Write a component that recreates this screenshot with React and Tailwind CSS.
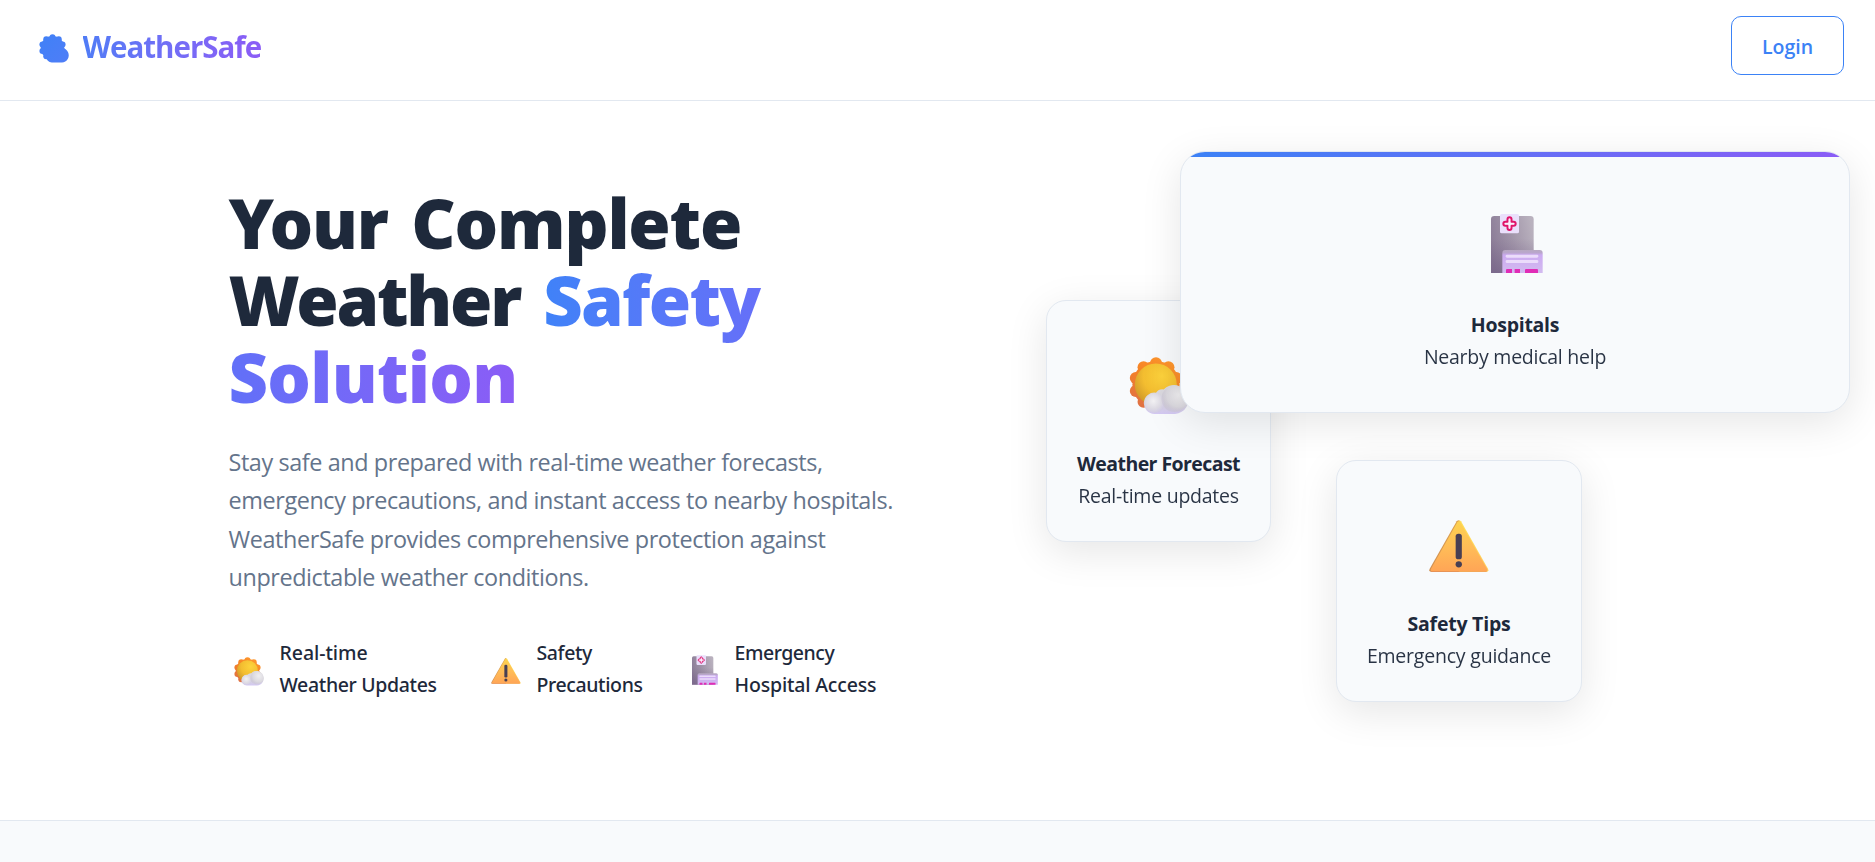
import React from 'react';

// Ten rounded petals spaced evenly around the disc.
const petals = Array.from({ length: 10 }, (_, i) => {
  const a = (i * Math.PI) / 5;
  return [27 + 21.2 * Math.sin(a), 27.5 - 21.2 * Math.cos(a)];
});
const cloudPath =
  'M25.5 57A10.7 10.7 0 1 1 27 35.7A8 8 0 0 1 34.6 32.4A14.5 14.5 0 1 1 46 57Z';

function Petals({ fill }) {
  return (
    <g fill={fill}>
      <circle cx="27" cy="27.5" r="23.6" />
      {petals.map(([x, y], i) => (
        <circle key={i} cx={x} cy={y} r="6" />
      ))}
    </g>
  );
}

function SunCloud({ id, className }) {
  return (
    <svg viewBox="0 0 60 58" className={className}>
      <defs>
        <linearGradient id={`${id}-ray`} gradientUnits="userSpaceOnUse" x1="42" y1="0" x2="12" y2="54">
          <stop offset="0" stopColor="#ff9a2e" />
          <stop offset="0.45" stopColor="#f58225" />
          <stop offset="1" stopColor="#dd6f48" />
        </linearGradient>
        <radialGradient id={`${id}-disc`} cx="0.65" cy="0.3" r="0.75">
          <stop offset="0" stopColor="#fdd33c" />
          <stop offset="0.6" stopColor="#f3bd30" />
          <stop offset="1" stopColor="#d19a2a" />
        </radialGradient>
        <radialGradient id={`${id}-left`} cx="0.45" cy="0.4" r="0.65">
          <stop offset="0" stopColor="#f3f2f4" />
          <stop offset="0.6" stopColor="#dedbe4" />
          <stop offset="1" stopColor="#cfc8e6" />
        </radialGradient>
        <linearGradient id={`${id}-cloud`} x1="0" y1="0" x2="0" y2="1">
          <stop offset="0" stopColor="#dddce0" />
          <stop offset="0.65" stopColor="#d6d3dc" />
          <stop offset="1" stopColor="#d3c8f3" />
        </linearGradient>
        <radialGradient id={`${id}-right`} cx="0.65" cy="0.35" r="0.65">
          <stop offset="0" stopColor="#efeef0" />
          <stop offset="0.7" stopColor="#dbd9df" />
          <stop offset="1" stopColor="#cac5d2" stopOpacity="0.5" />
        </radialGradient>
      </defs>
      <Petals fill={`url(#${id}-ray)`} />
      <circle cx="26.8" cy="27.5" r="21" fill={`url(#${id}-disc)`} />
      <path d={cloudPath} fill={`url(#${id}-cloud)`} />
      <circle cx="25.5" cy="46" r="10" fill={`url(#${id}-left)`} />
      <circle cx="45.6" cy="41.8" r="13.2" fill={`url(#${id}-right)`} />
    </svg>
  );
}

function Warning({ id, className }) {
  return (
    <svg viewBox="0 0 180 157" className={className}>
      <defs>
        <linearGradient id={`${id}-t`} x1="0" y1="0" x2="0" y2="1">
          <stop offset="0" stopColor="#fdd24f" />
          <stop offset="0.55" stopColor="#ffbb57" />
          <stop offset="1" stopColor="#ffa556" />
        </linearGradient>
        <linearGradient id={`${id}-e`} x1="0" y1="0" x2="1" y2="0">
          <stop offset="0" stopColor="#cf8f52" />
          <stop offset="0.49" stopColor="#dca04f" />
          <stop offset="0.52" stopColor="#ffdf57" />
          <stop offset="1" stopColor="#ffd05c" />
        </linearGradient>
      </defs>
      <path
        d="M83 4Q89.500 -3 96 4L177 146Q181 156 171 156H8Q-2 156 2 146Z"
        fill={`url(#${id}-e)`}
      />
      <path d="M85 7Q89.500 1 94 7L174 146Q177 154 170 154H10Q3 154 6 146Z" fill={`url(#${id}-t)`} />
      <path d="M6 155.500H173" stroke="#ee8f58" strokeWidth="2.500" />
      <rect x="80" y="41" width="18.500" height="77" rx="8" fill="#483f53" />
      <circle cx="89.300" cy="133" r="9.500" fill="#483f53" />
    </svg>
  );
}

function Hospital({ id, className }) {
  return (
    <svg viewBox="0 0 156 177" className={className}>
      <defs>
        <linearGradient id={`${id}-b`} x1="0" y1="0.6" x2="1" y2="0.3">
          <stop offset="0" stopColor="#8a7b96" />
          <stop offset="0.5" stopColor="#a094a8" />
          <stop offset="1" stopColor="#b9b1be" />
        </linearGradient>
        <linearGradient id={`${id}-s`} x1="0" y1="0" x2="0" y2="1">
          <stop offset="0.4" stopColor="#6a5480" stopOpacity="0" />
          <stop offset="1" stopColor="#6a5480" stopOpacity="0.45" />
        </linearGradient>
        <linearGradient id={`${id}-f`} x1="0" y1="0" x2="0" y2="1">
          <stop offset="0" stopColor="#b7a9c2" />
          <stop offset="0.12" stopColor="#b9a6cc" />
          <stop offset="0.22" stopColor="#cbaaf1" />
          <stop offset="1" stopColor="#d3bbf0" />
        </linearGradient>
      </defs>
      <path d="M0 177V16Q0 6 10 6H118Q128 6 128 16V177Z" fill={`url(#${id}-b)`} />
      <path d="M0 177V16Q0 6 10 6H118Q128 6 128 16V177Z" fill={`url(#${id}-s)`} />
      <path d="M34 177V117Q34 108 43 108H146Q155 108 155 117V177Z" fill={`url(#${id}-f)`} />
      <rect x="44" y="122" width="98" height="9" rx="4" fill="#ebdcfb" />
      <rect x="44" y="138" width="98" height="9" rx="4" fill="#ebdcfb" />
      <path d="M45 177V168Q45 165 48 165H63V177ZM71 177V165H87V177ZM102 177V168Q102 165 105 165H138Q141 165 141 168V177Z" fill="#e02cb6" />
      <rect x="27" y="0" width="57" height="58" rx="5" fill="#eadffb" />
      <path
        d="M49.500 16Q49.500 10 55.500 10T61.500 16V23H68Q74 23 74 29T68 35H61.500V42Q61.500 48 55.500 48T49.500 42V35H43Q37 35 37 29T43 23H49.500Z"
        fill="#f6e6fb"
        stroke="#e0146a"
        strokeWidth="6"
        strokeLinejoin="round"
      />
      <path d="M55.500 16V42M42 29H69" stroke="#fbeefc" strokeWidth="4" />
    </svg>
  );
}

function Card({ className, icon, title, titleClass, sub, subClass, bar }) {
  return (
    <div
      className={`absolute overflow-hidden border border-[#e2e8f0] bg-[#f8fafc] text-center shadow-[0_10px_40px_rgba(0,0,0,0.1)] ${className}`}
    >
      {bar && (
        <div className="absolute inset-x-0 top-0 h-[5px] bg-[linear-gradient(90deg,#3b82f6,#8b5cf6)]" />
      )}
      <div className="mb-[21px] flex h-[96px] items-end justify-center">{icon}</div>
      <div className={`whitespace-nowrap text-[19.5px] font-bold leading-[32px] ${titleClass}`}>{title}</div>
      <div className={`whitespace-nowrap text-[19.5px] leading-[32px] opacity-95 ${subClass}`}>{sub}</div>
    </div>
  );
}

const lines = [
  ['Stay safe and prepared with real-time weather forecasts,', 'tracking-[-0.4px]'],
  ['emergency precautions, and instant access to nearby hospitals.', 'tracking-[-0.4px]'],
  ['WeatherSafe provides comprehensive protection against', 'tracking-[-0.39px]'],
  ['unpredictable weather conditions.', 'tracking-[-0.4px]'],
];

export default function App() {
  return (
    <div className="flex h-[862px] w-full flex-col overflow-hidden bg-white font-['Open_Sans','Noto_Sans',sans-serif] text-[#1e293b]">
      <header className="flex h-[101px] shrink-0 items-start justify-between border-b border-[#e2e8f0] pl-[38.5px] pr-[31px] pt-[16px]">
        <div className="flex h-[59px] items-center">
          <svg viewBox="0 0 60 58" className="mt-[6px] h-[29px] w-[30px]">
            <defs>
              <linearGradient id="logo" gradientUnits="userSpaceOnUse" x1="0" y1="0" x2="60" y2="58">
                <stop offset="0" stopColor="#3f81f7" />
                <stop offset="1" stopColor="#4f7df7" />
              </linearGradient>
            </defs>
            <Petals fill="url(#logo)" />
            <path d={cloudPath} fill="url(#logo)" />
          </svg>
          <span className="ml-[14px] mt-[2px] bg-linear-to-r from-[#4f7cf6] to-[#8b5cf6] bg-clip-text text-[29.5px] font-bold leading-[48px] tracking-[-1px] text-transparent">
            WeatherSafe
          </span>
        </div>
        <button className="h-[59px] w-[113px] rounded-[10px] border border-[#3b82f6] pt-[2px] text-[19.5px] font-semibold leading-[32px] text-[#3b82f6]">
          Login
        </button>
      </header>

      <section className="flex h-[719px] shrink-0">
        <div className="w-[968px] pl-[228.5px] pt-[83px]">
          <h1 className="whitespace-nowrap font-['Noto_Sans'] text-[68.6px] font-black leading-[77px]">
            <span className="block tracking-[-1.2px] [word-spacing:7px]">Your Complete</span>
            <span className="flex gap-[23px]">
              <span className="tracking-[-2.2px]">Weather</span>
              <span className="-mb-[12px] bg-linear-to-r from-[#3f82f8] to-[#666ff8] bg-clip-text pb-[12px] pr-[4px] tracking-[-1.7px] text-transparent">
                Safety
              </span>
            </span>
            <span className="block w-[290px] bg-linear-to-r from-[#6170f8] to-[#8b5cf6] bg-clip-text tracking-[-0.75px] text-transparent">
              Solution
            </span>
          </h1>
          <p className="mt-[28px] whitespace-nowrap text-[23.4px] leading-[38.4px] text-[#64748b]">
            {lines.map(([t, c]) => (
              <span key={t} className={`block ${c}`}>{t}</span>
            ))}
          </p>
          <div className="mt-[40.5px] flex whitespace-nowrap font-['Noto_Sans'] text-[19.5px] font-medium leading-[32px]">
            <div className="flex w-[257px] items-center pl-[5px]">
              <SunCloud id="s1" className="mt-[4px] h-[29px] w-[30px]" />
              <div className="ml-[16px]">
                <div className="tracking-[-0.05px]">Real-time</div>
                <div className="tracking-[-0.35px]">Weather Updates</div>
              </div>
            </div>
            <div className="flex w-[200px] items-center pl-[5.5px]">
              <Warning id="w1" className="mt-[4px] h-[26px] w-[30px]" />
              <div className="ml-[15.5px]">
                <div className="tracking-[-0.4px]">Safety</div>
                <div className="tracking-[-0.38px]">Precautions</div>
              </div>
            </div>
            <div className="flex items-center pl-[6.5px]">
              <Hospital id="h1" className="mt-[1px] h-[30px] w-[26px]" />
              <div className="ml-[16.5px]">
                <div className="tracking-[-0.46px]">Emergency</div>
                <div className="tracking-[-0.17px]">Hospital Access</div>
              </div>
            </div>
          </div>
        </div>

        <div className="relative grow">
          <Card
            className="left-[78px] top-[199px] h-[242px] w-[225px] rounded-[20px] p-[30px]"
            icon={<SunCloud id="s2" className="mb-[12.5px] h-[58px] w-[60px] shrink-0" />}
            title="Weather Forecast"
            titleClass="-mx-[10px] tracking-[-0.57px]"
            sub="Real-time updates"
            subClass="-mx-[10px] tracking-[-0.25px]"
          />
          <Card
            className="left-[368px] top-[359px] h-[242px] w-[246px] rounded-[20px] p-[30px]"
            icon={<Warning id="w2" className="mb-[15px] h-[52.3px] w-[60px] shrink-0" />}
            title="Safety Tips"
            titleClass="tracking-[-0.23px]"
            sub="Emergency guidance"
            subClass="-mx-[10px] tracking-[-0.21px]"
          />
          <Card
            bar
            className="left-[212px] top-[50px] h-[262px] w-[670px] rounded-[25px] p-[40px]"
            icon={<Hospital id="h2" className="mb-[15px] ml-[4px] h-[59px] w-[52px] shrink-0" />}
            title="Hospitals"
            titleClass="tracking-[-0.27px]"
            sub="Nearby medical help"
            subClass="tracking-[-0.25px]"
          />
        </div>
      </section>

      <section className="grow border-t border-[#e2e8f0] bg-[#f8fafc]" />
    </div>
  );
}
